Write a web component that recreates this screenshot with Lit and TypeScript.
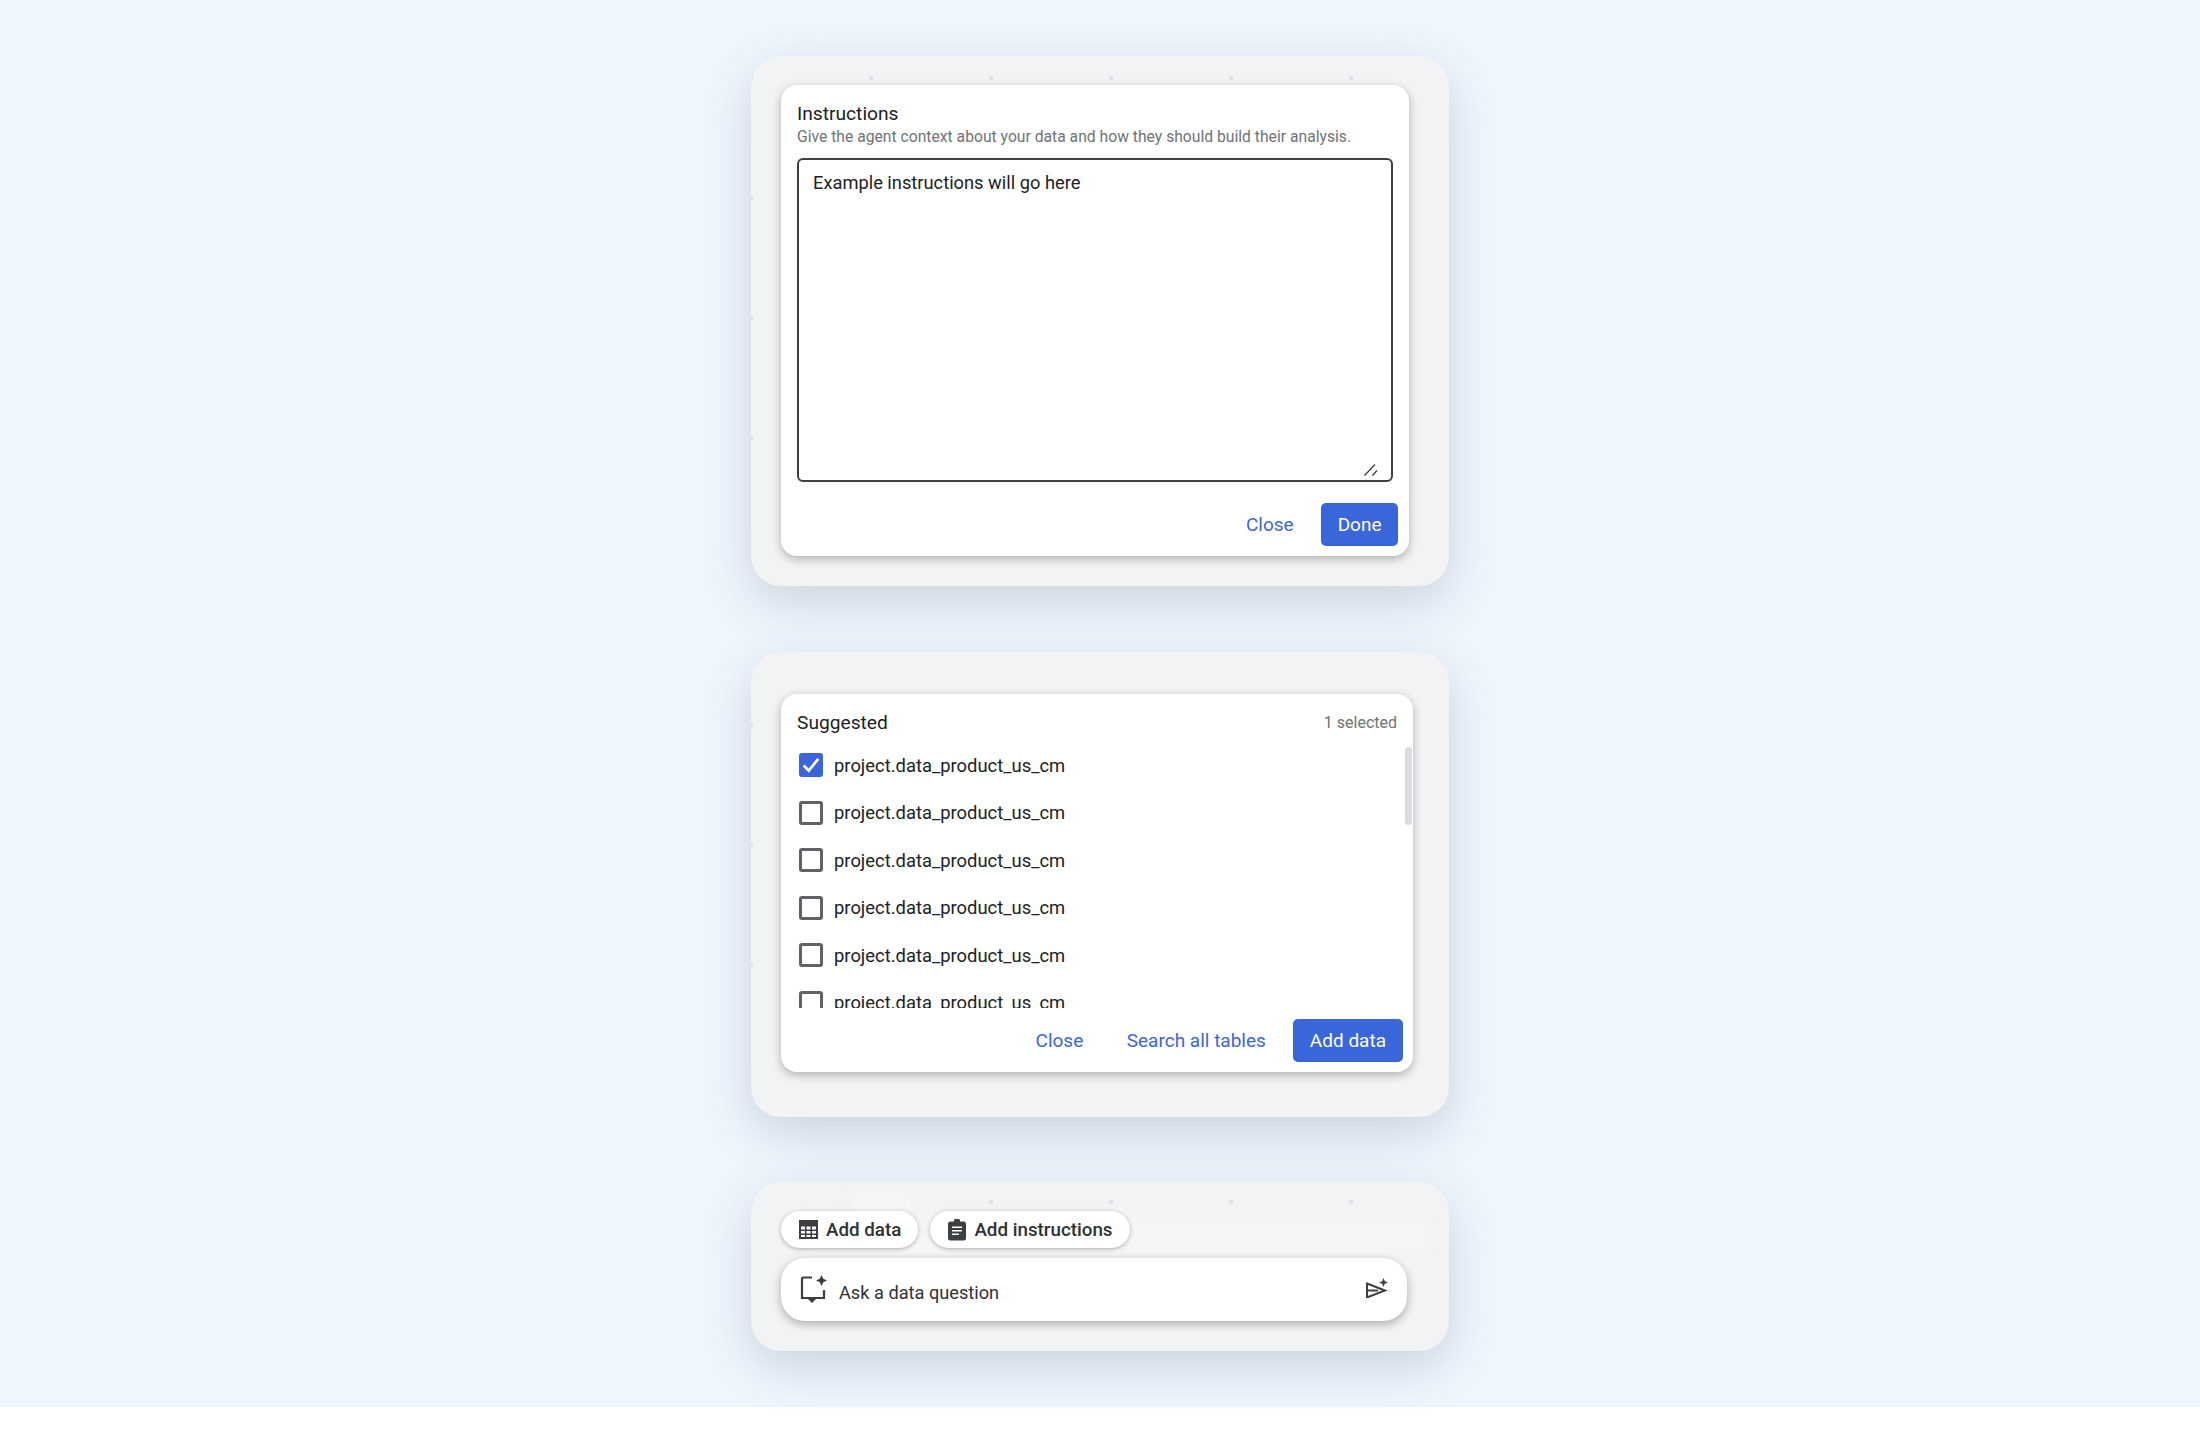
import { LitElement, css, html, svg } from 'lit';
import { customElement } from 'lit/decorators.js';

const TABLES = Array.from({ length: 6 }, () => 'project.data_product_us_cm');

const tableIcon = svg`<path fill-rule="evenodd" d="M0 0h19v19H0z M2 6.500v3h4v-3z M7.500 6.500v3h4v-3z M13 6.500v3h4v-3z M2 11v2.500h4V11z M7.500 11v2.500h4V11z M13 11v2.500h4V11z M2 15v2h4v-2z M7.500 15v2h4v-2z M13 15v2h4v-2z"/>`;

const clipboardIcon = svg`<path fill-rule="evenodd" d="M2.500 2.500H6V2a3 3 0 0 1 6 0v.5h3.500A2.500 2.500 0 0 1 18 5v14a2.500 2.500 0 0 1-2.500 2.500h-13A2.500 2.500 0 0 1 0 19V5a2.500 2.500 0 0 1 2.500-2.500z M4 7.500V9h10V7.500z M4 11v1.500h10V11z M4 14.500V16h7v-1.500z"/>`;

const askIcon = svg`
  <path d="M12 2.500H3.200a1.200 1.200 0 0 0-1.200 1.200V23h22v-8" fill="none" stroke="currentColor" stroke-width="2.200"/>
  <path d="M8 24h8l-4 4z" fill="currentColor"/>
  <path d="M21.500 0l1.800 3.700 3.700 1.800-3.700 1.800-1.800 3.700-1.800-3.700-3.700-1.800 3.700-1.800z" fill="currentColor"/>
`;

const sendIcon = svg`
  <path d="M1 5.500v14l18-7z M2 12.500h10" fill="none" stroke="currentColor" stroke-width="2" stroke-linejoin="miter"/>
  <path d="M17.500 0l1.300 3.200 3.200 1.300-3.200 1.300-1.300 3.200-1.300-3.200-3.200-1.300 3.200-1.300z" fill="currentColor"/>
`;

@customElement('app-root')
export class AppRoot extends LitElement {
  static styles = css`
    :host {
      display: block;
      background: #fff;
      height: 1438px;
      overflow: hidden;
      font-family: Roboto, 'Liberation Sans', sans-serif;
      color: #202124;
    }

    .stage {
      height: 1407px;
      box-sizing: border-box;
      background: #eff6fe;
      padding-top: 56px;
      display: flex;
      flex-direction: column;
      align-items: center;
      gap: 65.5px;
    }

    .panel {
      --dots: radial-gradient(circle 2.5px, #dfe1e5 98%, transparent);
      --cover: linear-gradient(#f1f3f5, #f1f3f5);
      position: relative;
      width: 698px;
      box-sizing: border-box;
      border-radius: 30px;
      padding-left: 30px;
      background-color: #f1f3f5;
      background-image: var(--cover), var(--dots);
      background-repeat: no-repeat, repeat;
      box-shadow: 0 16px 50px rgba(60, 70, 90, 0.2);
    }

    /* the cover layer hides the dot grid under and below each card */
    .instructions {
      height: 530px;
      padding-top: 29px;
      background-size: 100% 60px, 120px 120px;
      background-position: bottom, -60px -38px;
    }

    .suggested {
      height: 465px;
      padding-top: 42px;
      background-size: 100% 80px, 120px 120px;
      background-position: bottom, -60px 13px;
    }

    .composer {
      height: 169px;
      padding-top: 29px;
      background-size: 100% 60px, 120px 120px;
      background-position: bottom, -60px -40px;
    }

    .composer::before {
      content: '';
      position: absolute;
      left: 60px;
      right: 20px;
      top: 34px;
      height: 40px;
      background: #f5f5f5;
      filter: blur(8px);
    }

    .composer::after {
      content: '';
      position: absolute;
      left: 100px;
      top: 8px;
      width: 60px;
      height: 26px;
      background: #f5f5f5;
      filter: blur(5px);
    }

    .card {
      position: relative;
      box-sizing: border-box;
      background: #fff;
      border-radius: 16px;
      box-shadow: 0 3px 10px rgba(0, 0, 0, 0.28);
    }

    .instructions .card {
      width: 628px;
      height: 471px;
      padding: 17px 16px 10px;
    }

    .suggested .card {
      width: 632px;
      height: 378px;
      padding: 17px 0 11px 16px;
    }

    h2 {
      margin: 0;
      font-size: 19.2px;
      line-height: 24px;
      font-weight: 450;
      color: #202124;
    }

    .hint {
      margin: 1px 0 11px;
      font-size: 15.7px;
      line-height: 20px;
      color: #6f7377;
    }

    .field {
      position: relative;
      height: 324px;
    }

    textarea {
      display: block;
      width: 100%;
      height: 100%;
      box-sizing: border-box;
      margin: 0;
      padding: 10.5px 14px;
      border: 2px solid #3c4043;
      border-radius: 6px;
      outline: none;
      resize: none;
      font: 18.3px/24px Roboto, 'Liberation Sans', sans-serif;
      color: #202124;
    }

    .grip {
      position: absolute;
      right: 15px;
      bottom: 6px;
      width: 14px;
      height: 12px;
      color: #3c4043;
    }

    .actions {
      display: flex;
      justify-content: flex-end;
      align-items: center;
    }

    .instructions .actions {
      gap: 11.5px;
      margin: 21px -5px 0 0;
    }

    .suggested .actions {
      gap: 11.5px;
      margin: 11px 10.5px 0 0;
    }

    button {
      height: 43px;
      box-sizing: border-box;
      padding: 0 16px;
      border: none;
      border-radius: 5px;
      background: transparent;
      color: #3b66d9;
      font: 450 19px Roboto, 'Liberation Sans', sans-serif;
    }

    button.primary {
      padding: 0 16.5px;
      background: #3b66d9;
      color: #fff;
    }

    .head {
      display: flex;
      justify-content: space-between;
      align-items: center;
      padding-right: 16px;
    }

    .count {
      font-size: 16px;
      color: #6f7377;
    }

    .list {
      height: 266px;
      margin-top: 7px;
      overflow: hidden;
    }

    .row {
      display: flex;
      align-items: center;
      gap: 11px;
      height: 47.5px;
      padding-left: 2px;
      font-size: 18.4px;
      color: #202124;
    }

    .box {
      width: 24px;
      height: 24px;
      flex: none;
      box-sizing: border-box;
      border: 3px solid #5f6368;
      border-radius: 3px;
    }

    .box.on {
      border: none;
      background: #3b66d9;
      display: flex;
      align-items: center;
      justify-content: center;
      color: #fff;
    }

    .box svg {
      width: 18px;
      height: 16px;
    }

    .thumb {
      position: absolute;
      right: 1px;
      top: 53px;
      width: 7px;
      height: 78px;
      border-radius: 4px;
      background: #dadce0;
    }

    .chips {
      position: relative;
      z-index: 1;
      display: flex;
      gap: 12px;
    }

    .chip {
      display: flex;
      align-items: center;
      gap: 8px;
      height: 37px;
      padding: 0 17px 0 18px;
      border-radius: 19px;
      background: #fff;
      box-shadow: 0 1px 4px rgba(0, 0, 0, 0.3);
      font-size: 18.8px;
      font-weight: 500;
      color: #303134;
    }

    .chip svg {
      fill: #3c4043;
      flex: none;
    }

    .ask {
      position: relative;
      z-index: 1;
      display: flex;
      align-items: center;
      width: 626px;
      height: 63px;
      box-sizing: border-box;
      margin-top: 10px;
      padding: 0 18px 0 19px;
      border-radius: 24px;
      background: #fff;
      box-shadow: 0 3px 10px rgba(0, 0, 0, 0.3);
      font-size: 18.2px;
      color: #303134;
    }

    .ask svg {
      color: #3c4043;
      flex: none;
    }

    .ask .label {
      flex: 1;
      margin: 5px 0 0 12px;
    }

    .ask .send {
      margin: 0 1px 3px 0;
    }
  `;

  render() {
    return html`
      <div class="stage">
        <section class="panel instructions">
          <div class="card">
            <h2>Instructions</h2>
            <p class="hint">Give the agent context about your data and how they should build their analysis.</p>
            <div class="field">
              <textarea>Example instructions will go here</textarea>
              <svg class="grip" viewBox="0 0 14 12" fill="none" stroke="currentColor" stroke-width="1.300">
                <path d="M0.500 11.500L11 0.500M8.500 11.500L13 6.500" />
              </svg>
            </div>
            <div class="actions">
              <button>Close</button>
              <button class="primary">Done</button>
            </div>
          </div>
        </section>

        <section class="panel suggested">
          <div class="card">
            <div class="head">
              <h2>Suggested</h2>
              <span class="count">1 selected</span>
            </div>
            <div class="list">
              ${TABLES.map(
                (name, i) => html`
                  <div class="row">
                    ${i === 0
                      ? html`<span class="box on">
                          <svg viewBox="0 0 16 14" fill="none" stroke="currentColor" stroke-width="2.400">
                            <path d="M1.500 7.500L6 12L14.500 1.500" />
                          </svg>
                        </span>`
                      : html`<span class="box"></span>`}
                    <span>${name}</span>
                  </div>
                `
              )}
            </div>
            <div class="thumb"></div>
            <div class="actions">
              <button>Close</button>
              <button>Search all tables</button>
              <button class="primary">Add data</button>
            </div>
          </div>
        </section>

        <section class="panel composer">
          <div class="chips">
            <div class="chip">
              <svg width="19" height="19" viewBox="0 0 19 19">${tableIcon}</svg>
              Add data
            </div>
            <div class="chip">
              <svg width="18" height="22" viewBox="0 0 18 22">${clipboardIcon}</svg>
              Add instructions
            </div>
          </div>
          <div class="ask">
            <svg width="27" height="29" viewBox="0 0 27 29">${askIcon}</svg>
            <span class="label">Ask a data question</span>
            <svg class="send" width="22" height="20" viewBox="0 0 22 20">${sendIcon}</svg>
          </div>
        </section>
      </div>
    `;
  }
}

declare global {
  interface HTMLElementTagNameMap {
    'app-root': AppRoot;
  }
}
